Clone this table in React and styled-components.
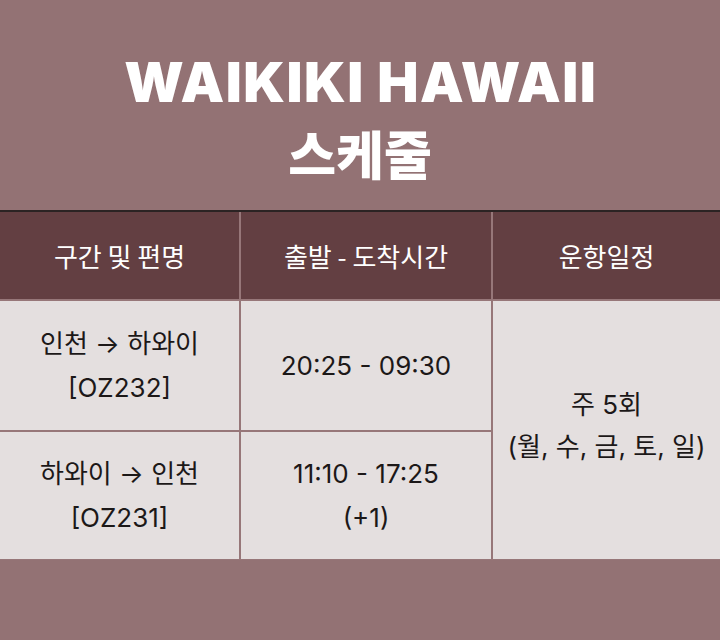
import React from "react";
import styled, { createGlobalStyle } from "styled-components";

const Global = createGlobalStyle`
  html, body { margin: 0; padding: 0; }
  body { background: #937274; font-family: "Inter", "Noto Sans CJK KR", sans-serif; }
`;

const Page = styled.div`
  width: 720px;
  height: 640px;
  background: #937274;
  display: flex;
  flex-direction: column;
`;

const Hero = styled.header`
  height: 210px;
  display: flex;
  flex-direction: column;
  align-items: center;
  justify-content: center;
  padding-top: 30px;
  box-sizing: border-box;
  color: #ffffff;
  font-weight: 900;
`;

const TitleLatin = styled.div`
  font-family: "Inter", sans-serif;
  font-size: 55px;
  line-height: 66px;
  letter-spacing: 1.5px;
  padding-left: 1.5px;
`;

const TitleKorean = styled.div`
  font-family: "Noto Sans CJK KR", sans-serif;
  font-size: 52px;
  line-height: 76px;
`;

const Table = styled.div`
  display: grid;
  grid-template-columns: 239px 250px 1fr;
  grid-template-rows: 87px 129px 127px;
  gap: 2px;
  background: #977779;
  border-top: 2px solid #2b2323;
  border-bottom: 1px solid #977779;
`;

const HeadCell = styled.div`
  background: #633f42;
  color: #ffffff;
  font-family: "Noto Sans CJK KR", sans-serif;
  font-size: 26px;
  display: flex;
  align-items: center;
  justify-content: center;
`;

const Cell = styled.div`
  background: #e4dfdf;
  color: #1c1818;
  font-size: 26px;
  line-height: ${(p) => (p.span ? 42 : 44)}px;
  display: flex;
  flex-direction: column;
  align-items: center;
  justify-content: center;
  text-align: center;
  padding-bottom: ${(p) => (p.span ? 8 : 0)}px;
  grid-row: ${(p) => (p.span ? "2 / span 2" : "auto")};
  grid-column: ${(p) => (p.span ? "3" : "auto")};
`;

export default function App() {
  return (
    <Page>
      <Global />
      <Hero>
        <TitleLatin>WAIKIKI HAWAII</TitleLatin>
        <TitleKorean>스케줄</TitleKorean>
      </Hero>
      <Table>
        <HeadCell>구간 및 편명</HeadCell>
        <HeadCell>출발 - 도착시간</HeadCell>
        <HeadCell>운항일정</HeadCell>
        <Cell>
          <div>인천 → 하와이</div>
          <div>[OZ232]</div>
        </Cell>
        <Cell>
          <div>20:25 - 09:30</div>
        </Cell>
        <Cell span>
          <div>주 5회</div>
          <div>(월, 수, 금, 토, 일)</div>
        </Cell>
        <Cell>
          <div>하와이 → 인천</div>
          <div>[OZ231]</div>
        </Cell>
        <Cell>
          <div>11:10 - 17:25</div>
          <div>(+1)</div>
        </Cell>
      </Table>
    </Page>
  );
}
